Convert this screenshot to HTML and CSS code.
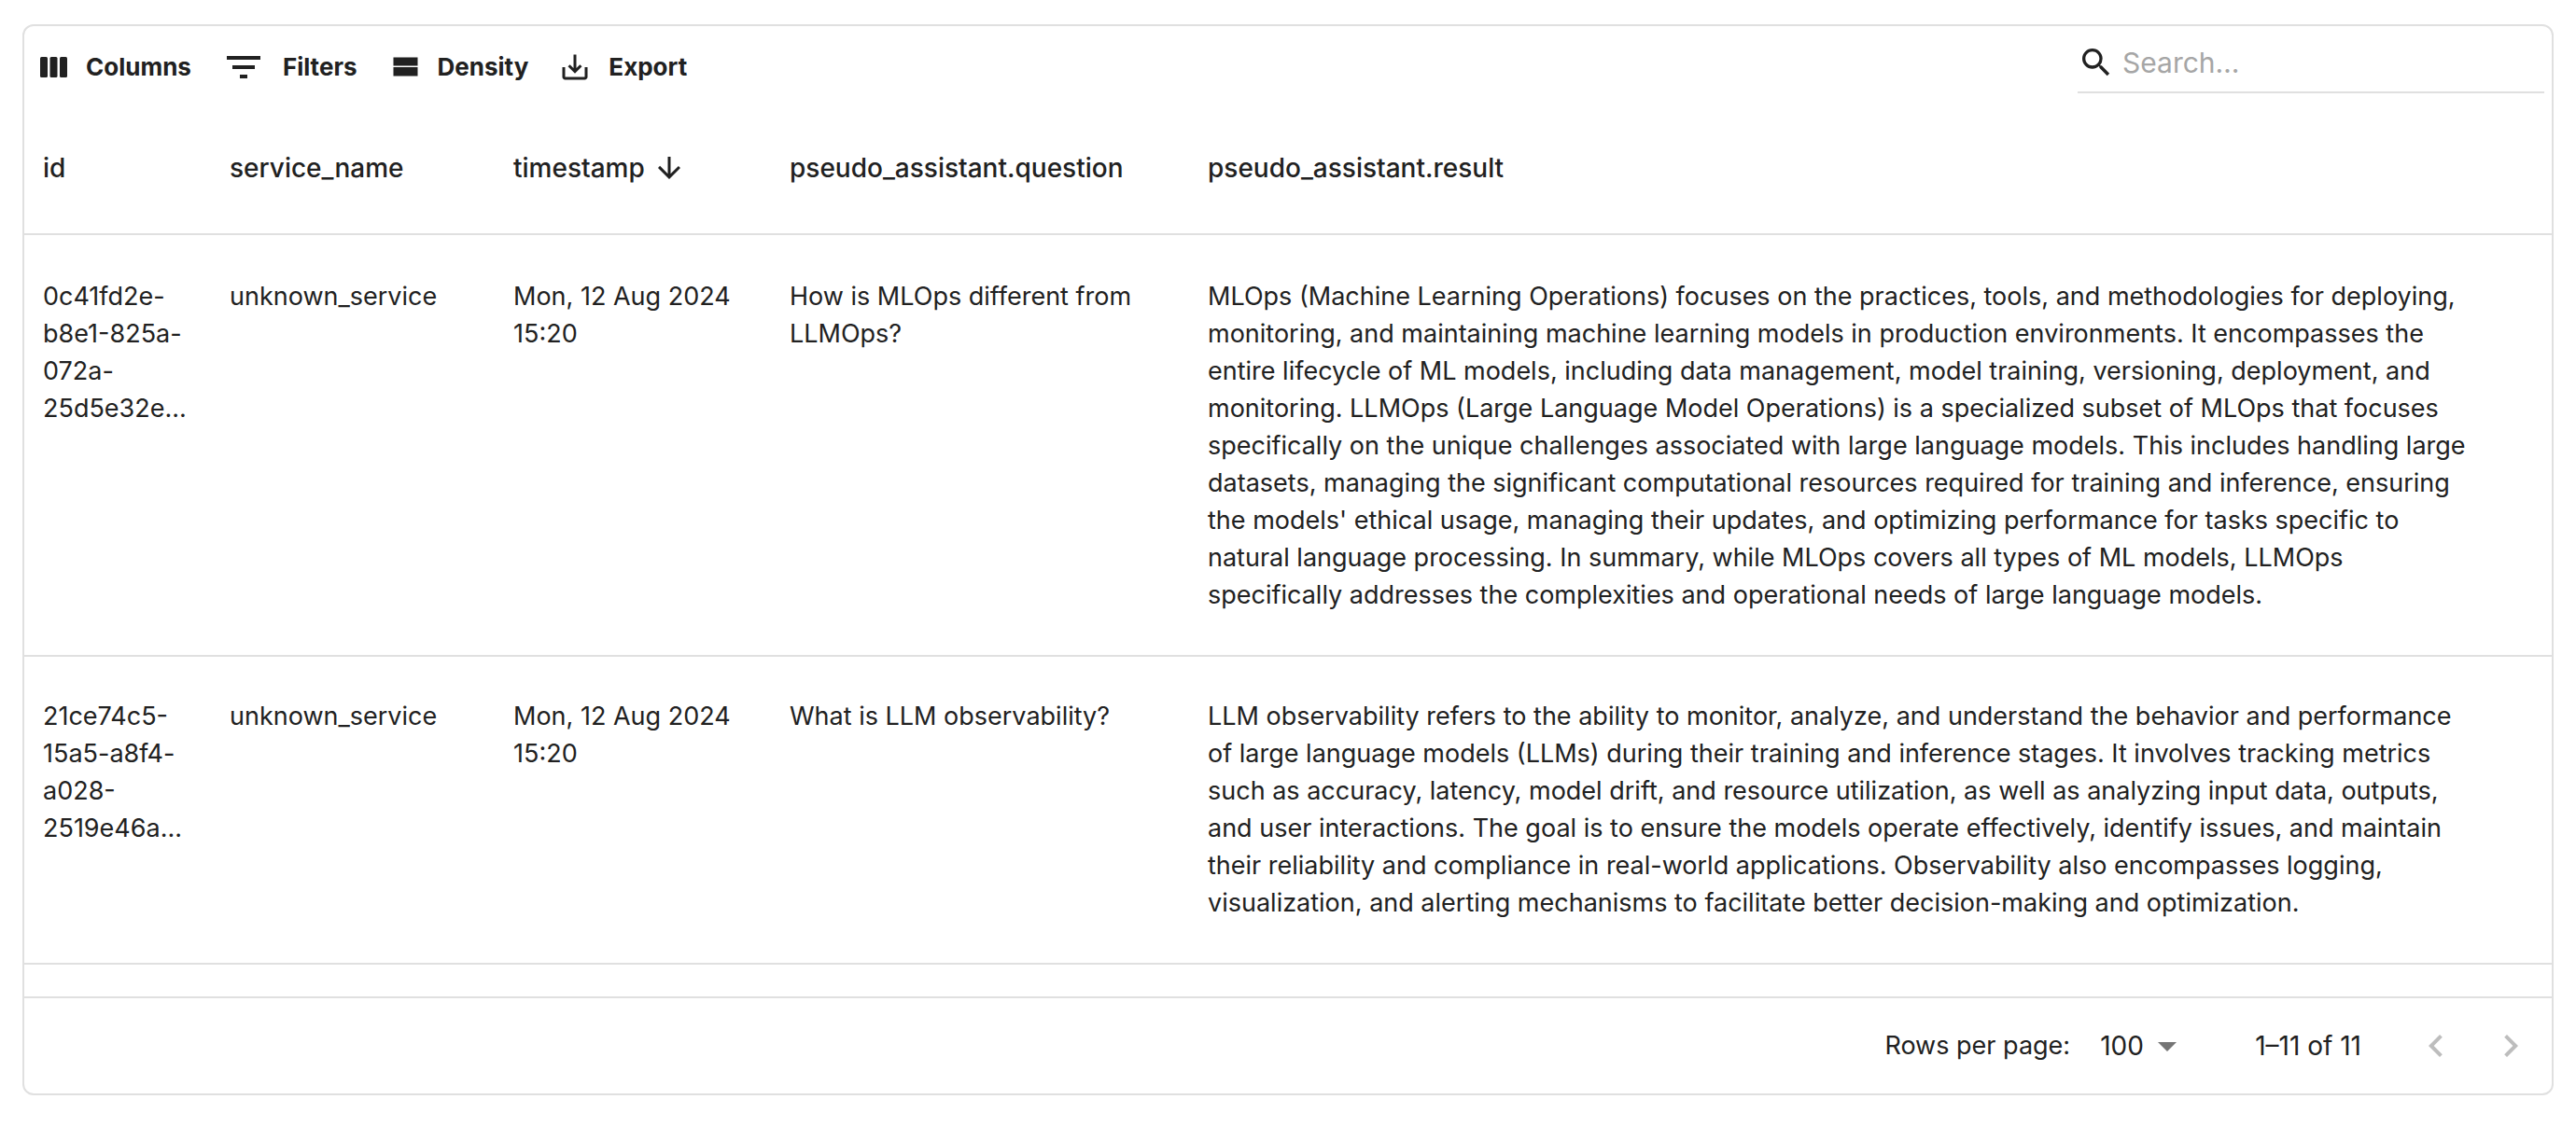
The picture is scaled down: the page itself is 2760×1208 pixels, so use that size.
FILE: index.html
```html
<!DOCTYPE html>
<html lang="en">
<head>
<meta charset="utf-8">
<title>Traces</title>
<link rel="stylesheet" href="styles.css">
</head>
<body>
<main class="grid">
  <div class="toolbar">
    <div class="toolbar-actions">
      <button class="tool" type="button"><svg class="icon" viewBox="0 0 36 36"><rect x="5" y="7" width="8" height="22" rx="1.500"/><rect x="15.500" y="7" width="8" height="22" rx="1.500"/><rect x="26" y="7" width="8" height="22" rx="1.500"/></svg>Columns</button>
      <button class="tool" type="button"><svg class="icon-filter" viewBox="0 0 24 24"><path d="M10 18h4v-2h-4v2zM3 6v2h18V6H3zm3 7h12v-2H6v2z"/></svg>Filters</button>
      <button class="tool" type="button"><svg class="icon" viewBox="0 0 36 36"><path d="M6.500 7.500h26v9h-26zM6.500 18h26v9.500h-26z"/></svg>Density</button>
      <button class="tool" type="button"><svg class="icon" viewBox="0 0 24 24"><path d="M19 12v7H5v-7H3v7c0 1.100.9 2 2 2h14c1.100 0 2-.9 2-2v-7h-2zm-6 .67l2.590-2.580L17 11.500l-5 5-5-5 1.410-1.410L11 12.670V3h2z"/></svg>Export</button>
    </div>
    <label class="search">
      <svg class="icon-search" viewBox="0 0 24 24"><path d="M15.500 14h-.79l-.28-.27A6.471 6.471 0 0 0 16 9.500 6.500 6.500 0 1 0 9.500 16c1.610 0 3.090-.59 4.230-1.570l.27.28v.79l5 4.990L20.490 19l-4.990-5zm-6 0C7.010 14 5 11.990 5 9.500S7.010 5 9.500 5 14 7.010 14 9.500 11.990 14 9.500 14z"/></svg>
      <input type="search" placeholder="Search…" aria-label="Search">
    </label>
  </div>
  <table class="data">
    <colgroup><col class="c-id"><col class="c-service"><col class="c-time"><col class="c-question"><col></colgroup>
    <thead>
      <tr>
        <th scope="col">id</th>
        <th scope="col">service_name</th>
        <th scope="col"><span class="sorted">timestamp<svg class="icon" viewBox="0 0 24 24"><path d="M20 12l-1.410-1.410L13 16.170V4h-2v12.170l-5.580-5.590L4 12l8 8 8-8z"/></svg></span></th>
        <th scope="col">pseudo_assistant.question</th>
        <th scope="col">pseudo_assistant.result</th>
      </tr>
    </thead>
    <tbody>
      <tr>
        <td>0c41fd2e-b8e1-825a-072a-25d5e32e...</td>
        <td>unknown_service</td>
        <td>Mon, 12 Aug 2024 15:20</td>
        <td>How is MLOps different from LLMOps?</td>
        <td class="result">MLOps (Machine Learning Operations) focuses on the practices, tools, and methodologies for deploying, monitoring, and maintaining machine learning models in production environments. It encompasses the entire lifecycle of ML models, including data management, model training, versioning, deployment, and monitoring. LLMOps (Large Language Model Operations) is a specialized subset of MLOps that focuses specifically on the unique challenges associated with large language models. This includes handling large datasets, managing the significant computational resources required for training and inference, ensuring the models' ethical usage, managing their updates, and optimizing performance for tasks specific to natural language processing. In summary, while MLOps covers all types of ML models, LLMOps specifically addresses the complexities and operational needs of large language models.</td>
      </tr>
      <tr>
        <td>21ce74c5-15a5-a8f4-a028-2519e46a...</td>
        <td>unknown_service</td>
        <td>Mon, 12 Aug 2024 15:20</td>
        <td>What is LLM observability?</td>
        <td class="result">LLM observability refers to the ability to monitor, analyze, and understand the behavior and performance of large language models (LLMs) during their training and inference stages. It involves tracking metrics such as accuracy, latency, model drift, and resource utilization, as well as analyzing input data, outputs, and user interactions. The goal is to ensure the models operate effectively, identify issues, and maintain their reliability and compliance in real-world applications. Observability also encompasses logging, visualization, and alerting mechanisms to facilitate better decision-making and optimization.</td>
      </tr>
    </tbody>
  </table>
  <footer class="footer">
    <label for="rows">Rows per page:</label>
    <span class="select-wrap">
      <select id="rows"><option>25</option><option>50</option><option selected>100</option></select>
      <svg class="caret" viewBox="0 0 24 24"><path d="M7 10l5 5 5-5z"/></svg>
    </span>
    <span class="range">1–11 of 11</span>
    <button class="page" type="button" disabled aria-label="Previous page"><svg viewBox="0 0 24 24"><path d="M15.410 7.410L14 6l-6 6 6 6 1.410-1.410L10.830 12z"/></svg></button>
    <button class="page" type="button" disabled aria-label="Next page"><svg viewBox="0 0 24 24"><path d="M10 6L8.590 7.410 13.170 12l-4.580 4.590L10 18l6-6z"/></svg></button>
  </footer>
</main>
</body>
</html>
```
FILE: styles.css
```css
* { box-sizing: border-box; }
body {
  margin: 0;
  padding: 26px 24px 34px;
  background: #fff;
  color: #212121;
  font: 400 27px/40px Inter, "Liberation Sans", sans-serif;
}
button, input, select { font: inherit; color: inherit; border: 0; background: none; padding: 0; margin: 0; }
svg { fill: currentColor; flex: none; display: block; }
.grid { border: 2px solid #e0e0e0; border-radius: 12px; }
.toolbar { display: flex; justify-content: space-between; align-items: flex-start; padding: 16px 8px 0 12px; }
.toolbar-actions { display: flex; gap: 32px; padding-top: 4px; }
.tool { display: flex; align-items: center; gap: 18px; height: 48px; font-size: 26px; font-weight: 700; }
.icon { width: 36px; height: 36px; }
.icon-filter { width: 48px; height: 48px; }
.icon-search { width: 40px; height: 40px; }
.search { display: flex; align-items: center; gap: 8px; width: 500px; height: 56px; padding-bottom: 8px; border-bottom: 2px solid #e0e0e0; }
.search input { flex: 1; min-width: 0; font-size: 30px; outline: 0; appearance: none; }
.search input::placeholder { color: #a6a6a6; opacity: 1; }
.data { width: 100%; border-collapse: separate; border-spacing: 0; table-layout: fixed; }
.c-id { width: 200px; }
.c-service { width: 304px; }
.c-time { width: 296px; }
.c-question { width: 448px; }
th { padding: 60px 20px 50px; text-align: left; font-size: 28px; font-weight: 500; border-bottom: 2px solid #e0e0e0; }
.sorted { display: flex; align-items: center; gap: 8px; }
td { padding: 44px 20px; vertical-align: top; border-bottom: 2px solid #e0e0e0; }
tbody tr:first-child td { padding-top: 46px; }
tbody .result { padding-right: 86px; }
.footer { display: flex; align-items: center; justify-content: flex-end; height: 104px; margin-top: 34px; padding-right: 4px; border-top: 2px solid #e0e0e0; }
.select-wrap { position: relative; margin: 0 70px 0 32px; }
.select-wrap select { appearance: none; width: 96px; height: 48px; display: block; font-size: 28px; }
.caret { position: absolute; right: 0; top: 0; width: 48px; height: 48px; color: #757575; pointer-events: none; }
.range { margin-right: 40px; font-size: 28px; }
.page { padding: 16px; color: #bdbdbd; }
.page svg { width: 48px; height: 48px; }
```
